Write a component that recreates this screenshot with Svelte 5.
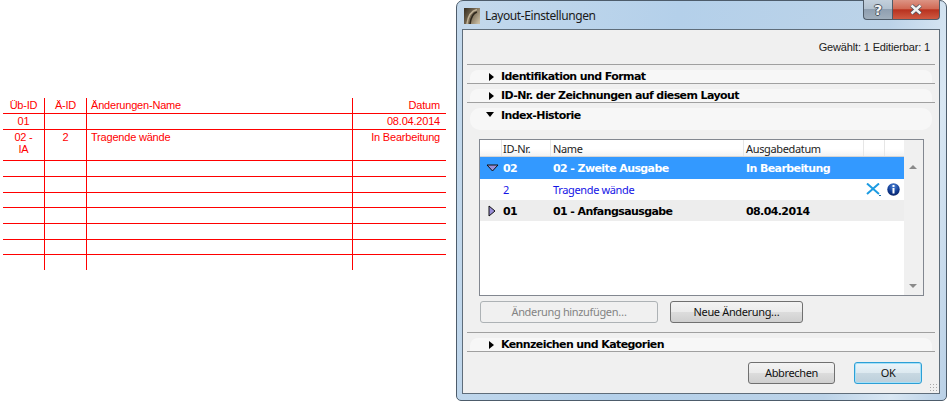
<script>
    const drawingRows = [
        { h: 15, cells: ["Üb-ID", "Ä-ID", "Änderungen-Name", "Datum"] },
        { h: 15, cells: ["01", "", "", "08.04.2014"] },
        { h: 30, cells: ["02 -\nIA", "2", "Tragende wände", "In Bearbeitung"] },
        { h: 15, cells: ["", "", "", ""] },
        { h: 15, cells: ["", "", "", ""] },
        { h: 14, cells: ["", "", "", ""] },
        { h: 15, cells: ["", "", "", ""] },
        { h: 15, cells: ["", "", "", ""] },
        { h: 14, cells: ["", "", "", ""] }
    ];
</script>

<div class="page">
    <!-- red table drawn on the layout sheet -->
    <div class="sheet">
        <div class="drawing">
            {#each drawingRows as row}
                <div class="drow" style="height: {row.h}px">
                    {#each row.cells as cell, i}
                        <div class="dcell c{i}">{cell}</div>
                    {/each}
                </div>
            {/each}
            <div class="drow tail">
                <div class="dcell c0"></div>
                <div class="dcell c1"></div>
                <div class="dcell c2"></div>
                <div class="dcell c3"></div>
            </div>
        </div>
    </div>

    <div class="window">
        <div class="titlebar">
            <svg class="logo" width="16" height="16" viewBox="0 0 16 16">
                <defs>
                    <linearGradient id="lg" x1="0" y1="0.2" x2="1" y2="0.8">
                        <stop offset="0" stop-color="#3f3628" />
                        <stop offset="0.5" stop-color="#7c6e57" />
                        <stop offset="1" stop-color="#c9bda3" />
                    </linearGradient>
                </defs>
                <rect width="16" height="16" fill="url(#lg)" />
                <path d="M3 16 C4 8 7 3 13 1.5" fill="none" stroke="#bfb196" stroke-width="1.6" />
                <path d="M6 16 C7 9 9 5 13 4" fill="none" stroke="#2e271c" stroke-width="1.6" />
            </svg>
            <span class="title">Layout-Einstellungen</span>
            <div class="winbtns">
                <div class="wbtn help">?</div>
                <div class="wbtn close">
                    <svg width="14" height="11" viewBox="0 0 14 11">
                        <path d="M2.5 1.5 L11.5 9.5 M11.5 1.5 L2.5 9.5" stroke="#47525e" stroke-width="4" />
                        <path d="M2.5 1.5 L11.5 9.5 M11.5 1.5 L2.5 9.5" stroke="#f2f2f2" stroke-width="2.4" />
                    </svg>
                </div>
            </div>
        </div>

        <div class="panel">
            <div class="selection">Gewählt: 1 Editierbar: 1</div>

            <div class="section">
                <div class="pill">
                    <span class="arrow-right"></span>
                    <span class="sname">Identifikation und Format</span>
                </div>
            </div>
            <div class="section">
                <div class="pill">
                    <span class="arrow-right"></span>
                    <span class="sname">ID-Nr. der Zeichnungen auf diesem Layout</span>
                </div>
            </div>

            <div class="section open">
                <div class="pill">
                    <span class="arrow-down"></span>
                    <span class="sname">Index-Historie</span>
                </div>

                <div class="list">
                    <div class="rows">
                        <div class="row head">
                            <div></div>
                            <div>ID-Nr.</div>
                            <div>Name</div>
                            <div>Ausgabedatum</div>
                            <div></div>
                            <div></div>
                        </div>
                        <div class="row issue selected">
                            <div class="tw">
                                <svg width="13" height="8" viewBox="0 0 13 8">
                                    <path d="M1 1 H12 L6.5 7 Z" fill="#9a8fd8" stroke="#111" />
                                </svg>
                            </div>
                            <div>02</div>
                            <div>02 - Zweite Ausgabe</div>
                            <div>In Bearbeitung</div>
                            <div></div>
                            <div></div>
                        </div>
                        <div class="row change">
                            <div></div>
                            <div>2</div>
                            <div>Tragende wände</div>
                            <div></div>
                            <div class="ico">
                                <svg width="15" height="13" viewBox="0 0 15 13">
                                    <path d="M1 0.5 L13 11 M13 0.5 L1 11" stroke="#1c9be2" stroke-width="2" />
                                    <rect x="13" y="12" width="2" height="1" fill="#1c6fa8" />
                                </svg>
                            </div>
                            <div class="ico">
                                <svg width="13" height="13" viewBox="0 0 13 13">
                                    <defs>
                                        <radialGradient id="ig" cx="0.5" cy="0.25" r="0.8">
                                            <stop offset="0" stop-color="#4f86d8" />
                                            <stop offset="0.6" stop-color="#0f3a92" />
                                            <stop offset="1" stop-color="#08205e" />
                                        </radialGradient>
                                    </defs>
                                    <circle cx="6.5" cy="6.5" r="6.2" fill="url(#ig)" />
                                    <rect x="5.5" y="2" width="2" height="2" fill="#fff" />
                                    <rect x="5.5" y="5" width="2" height="5.5" fill="#fff" />
                                </svg>
                            </div>
                        </div>
                        <div class="row issue closed">
                            <div class="tw">
                                <svg width="8" height="12" viewBox="0 0 8 12">
                                    <path d="M1 1 L7 6 L1 11 Z" fill="#9a8fd8" stroke="#111" />
                                </svg>
                            </div>
                            <div>01</div>
                            <div>01 - Anfangsausgabe</div>
                            <div>08.04.2014</div>
                            <div></div>
                            <div></div>
                        </div>
                    </div>
                    <div class="scrollbar">
                        <span class="sb-up"></span>
                        <span class="sb-down"></span>
                    </div>
                </div>

                <div class="actions">
                    <button class="btn add" disabled>Änderung hinzufügen…</button>
                    <button class="btn new">Neue Änderung…</button>
                </div>
            </div>

            <div class="section last">
                <div class="pill">
                    <span class="arrow-right"></span>
                    <span class="sname">Kennzeichen und Kategorien</span>
                </div>
            </div>

            <div class="footer">
                <button class="btn cancel">Abbrechen</button>
                <button class="btn ok">OK</button>
            </div>
            <div class="grip"></div>
        </div>
    </div>
</div>

<style>
    :global(body) {
        margin: 0;
        background: #fff;
    }

    .page {
        display: flex;
        width: 947px;
        height: 401px;
        overflow: hidden;
        background: #fff;
    }

    /* drawing */
    .sheet {
        width: 456px;
        flex: none;
        padding: 98px 0 0 3px;
        box-sizing: border-box;
    }

    .drawing {
        width: 443px;
        color: #ff0000;
        font: 11px/12px "Liberation Sans", Arial, sans-serif;
        letter-spacing: -0.2px;
    }

    .drow {
        display: grid;
        grid-template-columns: 41px 42px 266px 94px;
        border-bottom: 1px solid #ff0000;
    }

    .drow.tail {
        height: 15px;
        border-bottom: none;
    }

    .dcell {
        box-sizing: border-box;
        padding-top: 1px;
        text-align: center;
        white-space: pre-line;
    }

    .c1, .c2, .c3 {
        border-left: 1px solid #ff0000;
    }

    .c2 {
        text-align: left;
        padding-left: 4px;
    }

    .c3 {
        text-align: right;
        padding-right: 6px;
    }

    /* window */
    .window {
        width: 491px;
        height: 401px;
        flex: none;
        box-sizing: border-box;
        border: 1px solid #4d5c6b;
        border-radius: 7px 7px 5px 5px;
        background: linear-gradient(100deg, #c4d9ec 0%, #b4d0ea 40%, #bcd3e8 78%, #d9e7f3 90%, #b9d0e6 100%);
        padding: 0 6px 6px 5px;
        display: flex;
        flex-direction: column;
    }

    .titlebar {
        height: 28px;
        flex: none;
        display: flex;
        align-items: flex-start;
    }

    .logo {
        margin: 7px 0 0 2px;
    }

    .title {
        margin: 6px 0 0 5px;
        font: 12px/17px "Noto Sans", sans-serif;
        letter-spacing: -0.4px;
        color: #1a1a1a;
    }

    .winbtns {
        margin-left: auto;
        display: flex;
        margin-top: -1px;
    }

    .wbtn {
        height: 20px;
        box-sizing: border-box;
        border: 1px solid #4f5b68;
        border-top: none;
        display: flex;
        align-items: center;
        justify-content: center;
    }

    .help {
        width: 29px;
        border-radius: 0 0 0 4px;
        border-right: none;
        background: linear-gradient(#c3d0dc 0%, #b3c2d0 45%, #8f9fb0 50%, #a0aebc 100%);
        color: #f4f4f4;
        font: bold 14px/18px "DejaVu Sans", sans-serif;
        text-shadow: 1px 0 0 #4a5560, -1px 0 0 #4a5560, 0 1px 0 #4a5560, 0 -1px 0 #4a5560;
    }

    .close {
        width: 48px;
        border-radius: 0 0 4px 0;
        background: linear-gradient(#dc9484 0%, #d16a55 45%, #b8321f 52%, #cf5a42 100%);
    }

    .panel {
        position: relative;
        flex: 1;
        box-sizing: border-box;
        border: 1px solid #5f6d7a;
        background: #f0f0f0;
        padding: 0 4px;
        display: flex;
        flex-direction: column;
    }

    .selection {
        height: 34px;
        box-sizing: border-box;
        text-align: right;
        padding: 10px 5px 0 0;
        font: 11px/14px "Liberation Sans", Arial, sans-serif;
        letter-spacing: -0.15px;
        color: #222;
    }

    .section {
        border-top: 1px solid #a0a0a0;
        padding-top: 5px;
    }

    .pill {
        height: 13px;
        margin: 0 3px 0 3px;
        display: flex;
        align-items: center;
        background: #f7f7f7;
        border-radius: 8px 8px 0 0;
    }

    .sname {
        position: absolute;
        left: 38px;
        font: bold 11px/13px "DejaVu Sans", sans-serif;
        letter-spacing: -0.6px;
        color: #000;
    }

    .arrow-right, .arrow-down {
        width: 0;
        height: 0;
        border-style: solid;
        border-color: transparent;
    }

    .arrow-right {
        margin-left: 19px;
        border-width: 4.5px 0 4.5px 5px;
        border-left-color: #000;
    }

    .arrow-down {
        margin-left: 16px;
        border-width: 5px 4.5px 0 4.5px;
        border-top-color: #000;
    }

    .open .pill {
        height: 22px;
        border-radius: 10px;
        align-items: flex-start;
    }

    .open .pill .arrow-down {
        margin-top: 4px;
    }

    .open .pill .sname {
        margin-top: 1px;
    }

    .list {
        margin: 9px 11px 0 12px;
        height: 157px;
        box-sizing: border-box;
        border: 1px solid #828790;
        background: #fff;
        display: flex;
    }

    .rows {
        flex: 1;
        min-width: 0;
    }

    .row {
        display: grid;
        grid-template-columns: 21px 49px 193px 120px 21px 19px;
        height: 21px;
        align-items: center;
        font: 11px/14px "Noto Sans", sans-serif;
        letter-spacing: -0.35px;
    }

    .row.head {
        height: 17px;
        box-sizing: border-box;
        background: linear-gradient(#fff 55%, #f2f2f2 100%);
        border-bottom: 1px solid #d5d5d5;
        color: #222;
    }

    .row.head > div {
        height: 100%;
        border-left: 1px solid #e6e6e6;
        box-sizing: border-box;
        padding-left: 1px;
        padding-top: 1px;
        line-height: 15px;
    }

    .row.head > div:first-child {
        border-left: none;
    }

    .row.head > div:nth-child(n + 3) {
        padding-left: 2px;
    }

    .issue {
        font: bold 11px/14px "DejaVu Sans", sans-serif;
        letter-spacing: -0.6px;
    }

    .selected {
        height: 22px;
        background: #3399ff;
        color: #fff;
    }

    .closed {
        background: #ededed;
        color: #000;
    }

    .change {
        color: #1414e6;
    }

    .issue > div, .change > div {
        padding-left: 2px;
        padding-top: 2px;
    }

    .change > div {
        padding-top: 0;
    }

    .issue > div:nth-child(n + 3), .change > div:nth-child(n + 3) {
        padding-left: 3px;
    }

    .tw {
        display: flex;
        justify-content: center;
        padding-left: 3px !important;
        padding-top: 0 !important;
    }

    .ico {
        display: flex;
        padding-left: 3px !important;
    }

    .scrollbar {
        width: 19px;
        flex: none;
        background: #f0f0f0;
        position: relative;
    }

    .sb-up, .sb-down {
        position: absolute;
        left: 5px;
        width: 0;
        height: 0;
        border-style: solid;
        border-color: transparent;
    }

    .sb-up {
        top: 25px;
        border-width: 0 4px 4px 4px;
        border-bottom-color: #8a8a8a;
    }

    .sb-down {
        bottom: 7px;
        border-width: 4px 4px 0 4px;
        border-top-color: #8a8a8a;
    }

    .actions {
        display: flex;
        gap: 12px;
        margin: 5px 0 9px 13px;
    }

    .btn {
        height: 22px;
        box-sizing: border-box;
        border: 1px solid #707070;
        border-radius: 3px;
        padding: 0;
        font: 11px/14px "Noto Sans", sans-serif;
        letter-spacing: -0.35px;
        color: #111;
        background: linear-gradient(#f3f3f3 0%, #ebebeb 48%, #dcdcdc 52%, #cfcfcf 100%);
    }

    .add {
        width: 178px;
        border-color: #adb2b5;
        color: #838383;
        background: #f0f0f0;
    }

    .new {
        width: 133px;
    }

    .last {
        height: 20px;
        box-sizing: border-box;
        border-bottom: 1px solid #a0a0a0;
    }

    .footer {
        display: flex;
        justify-content: flex-end;
        gap: 19px;
        margin-top: 10px;
        padding-right: 13px;
    }

    .cancel {
        width: 87px;
    }

    .ok {
        width: 68px;
        border-color: #2c9fd6;
        box-shadow: inset 0 0 0 1px #a6e0f7;
        background: linear-gradient(#eaf5fb 0%, #dde9f0 48%, #c8d8e2 52%, #bccfdb 100%);
    }

    .grip {
        position: absolute;
        right: 2px;
        bottom: 2px;
        width: 8px;
        height: 8px;
        background-image: radial-gradient(#a8a8a8 40%, transparent 45%);
        background-size: 3px 3px;
    }
</style>
